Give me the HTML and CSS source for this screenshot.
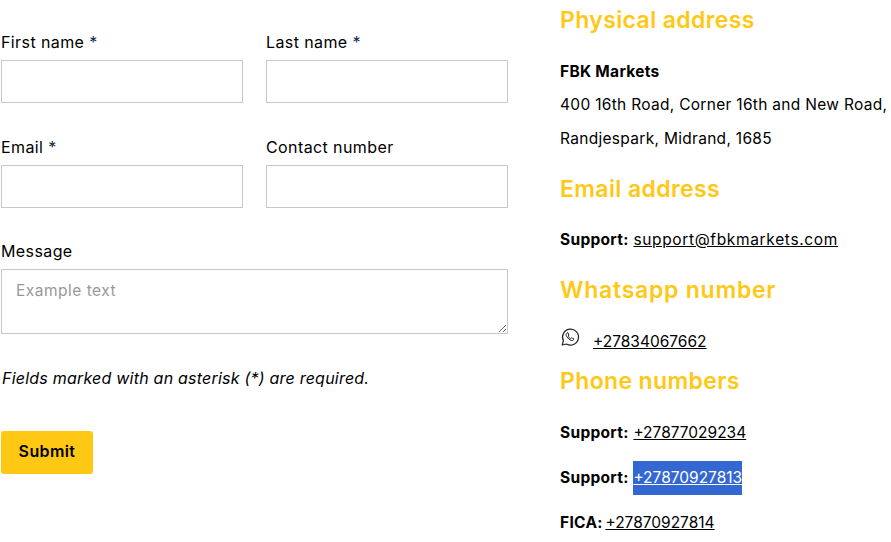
FILE: index.html
```html
<!DOCTYPE html>
<html lang="en">
  <head>
    <meta charset="UTF-8" />
    <title>Contact</title>
    <link rel="stylesheet" href="styles.css">
  </head>

  <body>
    <div class="page">
      <form class="contact-form">
        <div class="form-row">
          <div class="field">
            <label for="first">First name <span class="req">*</span></label>
            <input id="first" type="text" />
          </div>
          <div class="field">
            <label for="last">Last name <span class="req">*</span></label>
            <input id="last" type="text" />
          </div>
        </div>
        <div class="form-row">
          <div class="field">
            <label for="email">Email <span class="req">*</span></label>
            <input id="email" type="text" />
          </div>
          <div class="field">
            <label for="phone">Contact number</label>
            <input id="phone" type="text" />
          </div>
        </div>
        <div class="field message">
          <label for="message">Message</label>
          <textarea id="message" placeholder="Example text"></textarea>
        </div>
        <p class="note">Fields marked with an asterisk (*) are required.</p>
        <button class="submit" type="button">Submit</button>
      </form>

      <aside class="details">
        <h2>Physical address</h2>
        <div class="address">
          <p><b>FBK Markets</b></p>
          <p>400 16th Road, Corner 16th and New Road,</p>
          <p>Randjespark, Midrand, 1685</p>
        </div>
        <h2>Email address</h2>
        <p class="item email-item"><b>Support:</b> <a class="mail" href="#">support@fbkmarkets.com</a></p>
        <h2 class="wa-title">Whatsapp number</h2>
        <p class="whatsapp">
          <svg class="wa-icon" viewBox="0 0 20 20" width="20" height="20" fill="none" stroke="#222" stroke-width="1.2">
            <path d="M2.2 18l1.2-4.2A8 8 0 1 1 6.4 17z" stroke-linejoin="round" />
            <path d="M7 5.8c-1.2.8-1.2 2.2-.2 3.8s2.600 3.400 4.600 3.900c1.300.3 2.200-.3 2.500-1.500l-2.200-1.200-1 .9c-1-.4-2.100-1.500-2.600-2.700l.8-1-1-2.300z" stroke-width="1" stroke-linejoin="round" />
          </svg>
          <a class="tel" href="#">+27834067662</a>
        </p>
        <h2 class="phones">Phone numbers</h2>
        <p class="item"><b>Support:</b> <a class="tel" href="#">+27877029234</a></p>
        <p class="item"><b>Support:</b> <a class="tel selected" href="#">+27870927813</a></p>
        <p class="item fica"><b>FICA:</b> <a class="tel" href="#">+27870927814</a></p>
      </aside>
    </div>
  </body>
</html>
```

FILE: styles.css
```css
* {
  padding: 0;
  margin: 0;
  box-sizing: border-box;
}

body {
  font-family: Inter, "Liberation Sans", sans-serif;
  font-size: 15.5px;
  letter-spacing: 0.3px;
  color: #000;
  background: #fff;
  overflow: hidden;
}

.page {
  display: grid;
  grid-template-columns: 560px 331px;
  height: 542px;
}

.contact-form {
  padding: 32px 0 0 1px;
  width: 508px;
}

.form-row {
  display: grid;
  grid-template-columns: 242px 242px;
  column-gap: 23px;
  margin-bottom: 34px;
}

.field label {
  display: block;
  height: 22px;
  line-height: 20px;
  margin-bottom: 6px;
  font-size: 16px;
  letter-spacing: 0.4px;
}

.req {
  color: #0a2a4a;
}

.field input,
.field textarea {
  display: block;
  width: 100%;
  height: 43px;
  border: 1px solid #c8c8c8;
  background: #fff;
  outline: none;
  font: inherit;
}

.message label {
  margin-top: -1px;
}

.field textarea {
  height: 65px;
  padding: 11px 14px;
  letter-spacing: 0.5px;
  resize: vertical;
}

.field textarea::placeholder {
  color: #999;
}

.note {
  margin: 33px 0 0 1px;
  height: 22px;
  line-height: 22px;
  font-style: italic;
  font-size: 16px;
  letter-spacing: 0.22px;
}

.submit {
  display: block;
  width: 92px;
  height: 43px;
  margin-top: 42px;
  padding-bottom: 3px;
  border: 0;
  border-radius: 3px;
  background: #ffc815;
  color: #000;
  font: 600 16px Inter, "Liberation Sans", sans-serif;
  letter-spacing: 0.4px;
}

.details {
  padding-top: 3px;
}

.details h2 {
  height: 34px;
  line-height: 34px;
  font-size: 23px;
  font-weight: 600;
  letter-spacing: 0.37px;
  color: #ffc815;
}

.details h2.wa-title {
  letter-spacing: 0.75px;
}

.address {
  margin: 18px 0 16px;
  line-height: 34px;
}

.address p {
  height: 33.5px;
  white-space: nowrap;
}

.address p:first-child {
  height: 33px;
}

.address p:nth-child(2) {
  height: 34px;
}

.item {
  height: 34px;
  line-height: 34px;
  margin-bottom: 11px;
  white-space: nowrap;
}

.item.fica {
  word-spacing: -2px;
}

.details h2 + .item {
  margin-top: 17px;
}

.details .phones + .item {
  margin-top: 18px;
}

.details .email-item {
  margin-bottom: 16px;
}

.details a {
  color: #000;
  text-decoration: underline;
}

.details a.mail {
  letter-spacing: 0.65px;
}

.details a.tel {
  letter-spacing: 0;
}

.details a.selected {
  display: inline-block;
  background: #3367d1;
  color: #fff;
}

.whatsapp {
  display: flex;
  align-items: flex-start;
  height: 34px;
  line-height: 34px;
  margin-top: 18px;
}

.wa-icon {
  margin: 2px 13px 0 0;
}

.details h2.phones {
  margin-top: 5px;
}
```
